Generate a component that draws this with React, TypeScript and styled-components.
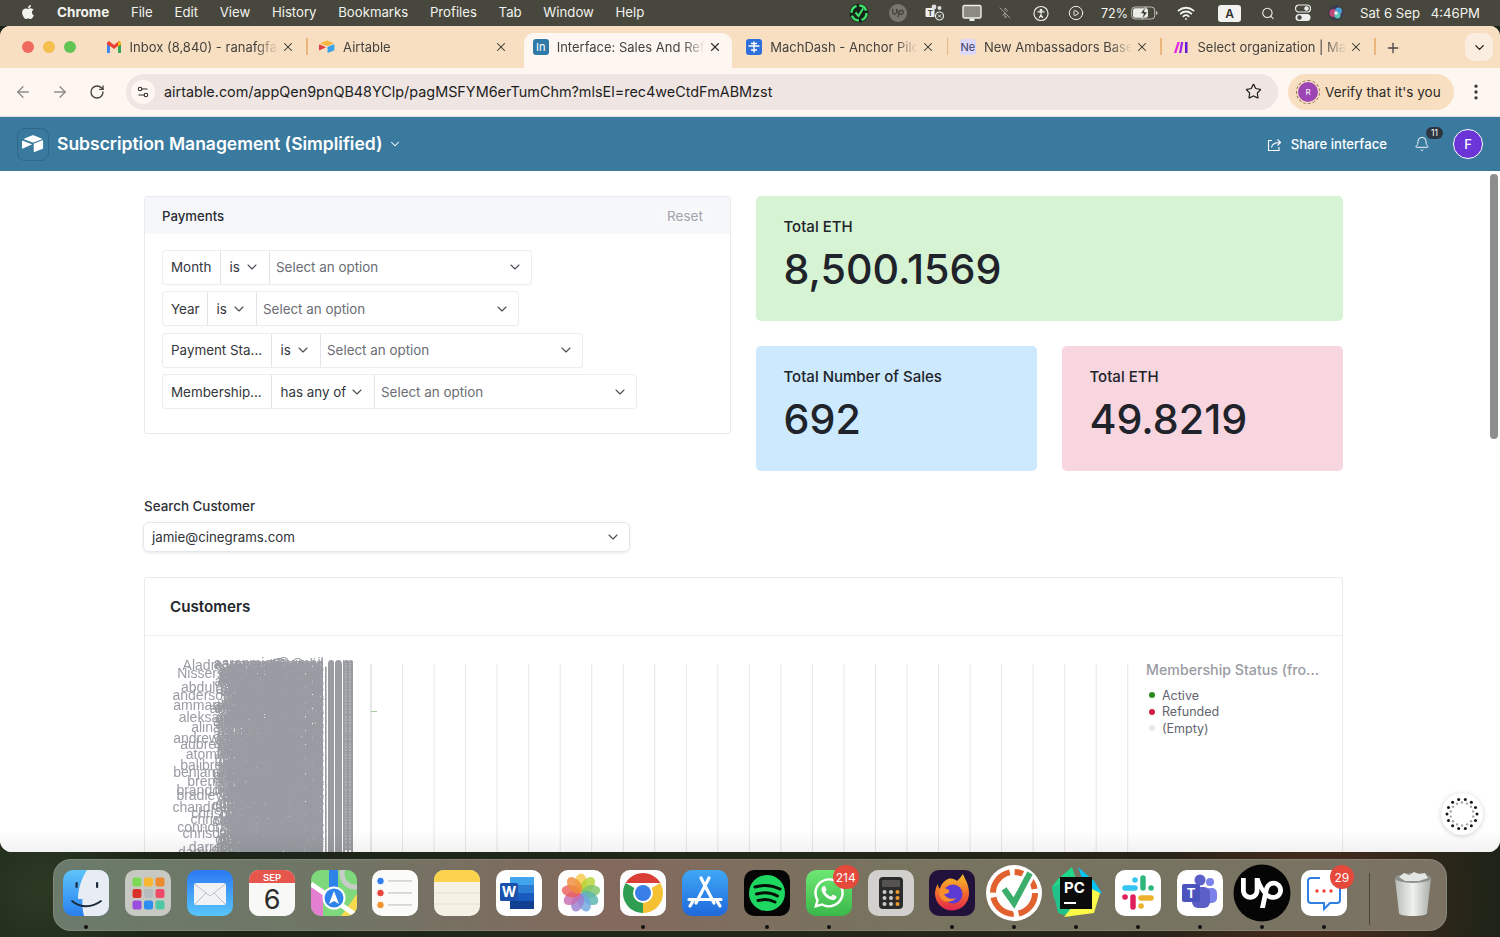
import React from "react";
import styled, { createGlobalStyle, css } from "styled-components";
import { ArrowLeft, ArrowRight, RotateCw, Star, MoreVertical, ChevronDown, X, Plus, Search, Wifi, Bell, Settings2, BluetoothOff, CirclePlay } from "lucide-react";
import { FaApple, FaWhatsapp } from "react-icons/fa";
import { SiUpwork } from "react-icons/si";

const Global = createGlobalStyle`
  html, body { margin: 0; padding: 0; height: 100%; overflow: hidden; }
  body { font-family: Inter, "Liberation Sans", sans-serif; -webkit-font-smoothing: antialiased; }
  #root { height: 100%; }
  * { box-sizing: border-box; }
`;

const Desktop = styled.div`
  width: 1500px; height: 937px; display: flex; flex-direction: column; overflow: hidden;
  background:
    radial-gradient(circle at 1320px 900px, #4a2e1e 0, rgba(74,46,30,0) 170px),
    radial-gradient(circle at 40px 890px, #2c3a24 0, rgba(44,58,36,0) 120px),
    linear-gradient(90deg, #1b2417, #20281a 50%, #2a2218 85%, #1f2418);
`;
const MenuBar = styled.header`
  height: 26px; flex: none; display: flex; align-items: center; background: #47473d; color: #f3f3ef;
  padding: 0 20px 0 21px; font-size: 13.2px;
`;
const AppleMark = styled.span` display: flex; width: 14px; font-size: 16px; margin-right: 22px; margin-top: -2px; `;
const MenuList = styled.nav` display: flex; gap: 21.7px; align-items: center; margin-top: -2px; `;
const MenuItem = styled.span<{ $bold?: boolean }>` font-weight: ${p => (p.$bold ? 700 : 400)}; font-size: ${p => (p.$bold ? "13.5px" : "inherit")}; `;
const Status = styled.div` margin-left: auto; display: flex; align-items: center; `;
const Slot = styled.span<{ $ml: number; $w: number; $faded?: boolean }>`
  display: flex; align-items: center; justify-content: center; flex: none;
  width: ${p => p.$w}px; margin-left: ${p => p.$ml}px; opacity: ${p => (p.$faded ? 0.6 : 1)};
`;
const Percent = styled.span` font-size: 12.5px; white-space: nowrap; `;
const KeyBox = styled.span`
  width: 23px; height: 17px; border-radius: 3px; background: #f2f2f0; color: #333; font-size: 12px; font-weight: 600;
  display: flex; align-items: center; justify-content: center;
`;
const Clock = styled.span` margin-left: 16px; width: 120px; white-space: nowrap; font-size: 13.2px; display: flex; justify-content: space-between; margin-top: -1px; `;

const BrowserWindow = styled.main`
  height: 826px; flex: none; display: flex; flex-direction: column; overflow: hidden; background: #fff;
  border-radius: 10px 10px 12px 12px;
`;
const TabStrip = styled.div`
  height: 42px; flex: none; background: #f8dfc2; display: flex; padding: 7px 0 0 22px; color: #3a3a38; position: relative;
`;
const Lights = styled.div` display: flex; gap: 9px; width: 72px; padding-top: 8px; `;
const Light = styled.span<{ $c: string }>` width: 12px; height: 12px; border-radius: 50%; background: ${p => p.$c}; `;
const Tab = styled.div<{ $active?: boolean; $divider?: boolean }>`
  width: 213.6px; height: 35px; padding: 0 13px 7px 11.5px; display: flex; align-items: center; position: relative; font-size: 13px; flex: none;
  ${p => p.$active && css`
    &::before { content: ""; position: absolute; inset: 0 3px 0 3px; background: #fdf6f1; border-radius: 10px 10px 0 0; }
  `}
  ${p => p.$divider && css`
    &::after { content: ""; position: absolute; right: 0; top: 5px; height: 17px; width: 1.5px; background: #ecb57c; }
  `}
`;
const Favicon = styled.span` width: 16px; height: 16px; flex: none; position: relative; display: flex; `;
const TabTitle = styled.span`
  position: relative; margin-left: 8px; flex: 1; overflow: hidden; white-space: nowrap; min-width: 0; color: #44423e;
  -webkit-mask-image: linear-gradient(90deg, #000 85%, transparent);
  mask-image: linear-gradient(90deg, #000 85%, transparent);
`;
const TabClose = styled.span` position: relative; display: flex; margin-left: 3px; color: #33322f; `;
const NewTab = styled.span` display: flex; margin: 0 0 6px 9px; align-items: center; color: #4a4a47; `;
const TabMenu = styled.span`
  position: absolute; left: 1465px; top: 7px; width: 28px; height: 28px; border-radius: 9px; background: #fbeee0;
  display: flex; align-items: center; justify-content: center; color: #222;
`;
const Toolbar = styled.div`
  height: 49px; flex: none; background: #fdf6f1; display: flex; align-items: center; padding: 0 0 1px 14px; border-bottom: 1px solid #e6e0dc; color: #8d8a87;
`;
const NavButton = styled.span<{ $w: number; $on?: boolean }>`
  display: flex; width: ${p => p.$w}px; flex: none; color: ${p => (p.$on ? "#45423c" : "#8f8c89")};
`;
const Omnibox = styled.div`
  width: 1152px; height: 36px; flex: none; border-radius: 18px; background: #efe6e3; display: flex; align-items: center; padding: 0 16px 0 5px; color: #1e1e1e; margin-left: 3px;
`;
const SiteButton = styled.span`
  width: 24px; height: 24px; border-radius: 50%; background: #fdf6f1; display: flex; align-items: center; justify-content: center; color: #2a2a2a; flex: none;
`;
const Url = styled.span` margin-left: 9px; font-size: 14.4px; flex: 1; white-space: nowrap; `;
const VerifyPill = styled.div`
  margin-left: 10px; width: 166px; height: 36px; flex: none; border-radius: 18px; background: #f8dfc2; display: flex; align-items: center; padding-left: 10px; gap: 7px; color: #2c2a26; font-size: 13.5px; white-space: nowrap;
`;
const Avatar = styled.span`
  width: 20px; height: 20px; border-radius: 50%; background: #9c45b5; color: #fff; font-size: 8px; display: flex; align-items: center; justify-content: center; outline: 1.5px dashed #8e7a60; outline-offset: 1px; flex: none;
`;
const KebabSlot = styled.span` display: flex; margin-left: 12px; color: #3a3835; `;

const AppHeader = styled.div`
  height: 54px; flex: none; background: #3a7a9f; display: flex; align-items: center; color: #fff; padding: 0 17px;
`;
const LogoBox = styled.span`
  width: 32px; height: 33px; border-radius: 8px; border: 1px solid #2f6889; display: flex; align-items: center; justify-content: center; flex: none;
`;
const AppTitle = styled.h1` margin: -1px 6px 0 8px; font-size: 17.5px; font-weight: 600; white-space: nowrap; `;
const HeaderRight = styled.div` margin-left: auto; display: flex; align-items: center; `;
const ShareLabel = styled.span` font-size: 13.2px; font-weight: 500; margin: -1px 0 0 9px; white-space: nowrap; `;
const BellWrap = styled.span` position: relative; margin-left: 27px; display: flex; `;
const BellBadge = styled.span`
  position: absolute; left: 12px; top: -9px; min-width: 17px; height: 12px; border-radius: 6px; background: #2c3440; color: #fff; font-size: 8.5px; display: flex; align-items: center; justify-content: center;
`;
const UserDot = styled.span`
  margin-left: 23px; width: 30px; height: 30px; border-radius: 50%; background: #6b35d8; border: 1.5px solid #fff; color: #fff; font-size: 13px; font-weight: 500; display: flex; align-items: center; justify-content: center;
`;

const Content = styled.section`
  flex: 1; min-height: 0; position: relative; overflow: hidden; background: #fff;
`;
const Page = styled.div` padding: 25px 157px 0 144px; `;
const TopGrid = styled.div` display: grid; grid-template-columns: 587px 587px; gap: 25px; height: 274px; align-items: start; `;
const FilterCard = styled.div` border: 1px solid #e9eaec; border-radius: 3px; height: 238px; `;
const FilterHead = styled.div`
  height: 37px; background: #f5f7fa; display: flex; align-items: center; justify-content: space-between; padding: 0 17px; font-size: 13.2px; font-weight: 500; color: #2a2d33;
`;
const ResetButton = styled.span`
  height: 20px; width: 56px; background: #f7f8fa; border-radius: 3px; color: #a2a5aa; font-weight: 400; font-size: 13.5px; display: flex; align-items: center; justify-content: center;
`;
const FilterList = styled.div` display: flex; flex-direction: column; align-items: flex-start; gap: 8.6px; padding: 16.5px 17px 0 17.5px; `;
const FilterRow = styled.div`
  display: flex; height: 33px; border-radius: 3px; box-shadow: 0 0 0 1px #eceded, 0 1px 2px rgba(0,0,0,.05); font-size: 13.4px; color: #33363c; background: #fff;
`;
const FieldName = styled.span<{ $w: number }>`
  width: ${p => p.$w}px; padding: 0 0 0 8.5px; display: flex; align-items: center; border-right: 1px solid #e4e5e7; white-space: nowrap;
`;
const Operator = styled.span<{ $w: number }>`
  width: ${p => p.$w}px; padding: 0 9px; display: flex; align-items: center; justify-content: space-between; border-right: 1px solid #e4e5e7; white-space: nowrap;
`;
const OptionSelect = styled.span`
  width: 261px; padding: 0 8px 0 6.5px; display: flex; align-items: center; justify-content: space-between; color: #6a6d73; white-space: nowrap;
`;
const StatColumn = styled.div` display: flex; flex-direction: column; gap: 25.4px; `;
const StatRow = styled.div` display: grid; grid-template-columns: 281px 281px; gap: 25px; `;
const StatCard = styled.div<{ $bg: string }>`
  height: 124.6px; border-radius: 5px; background: ${p => p.$bg}; padding: 21px 27.5px; color: #20232a;
`;
const StatLabel = styled.div` font-size: 15px; font-weight: 500; line-height: 20px; white-space: nowrap; `;
const StatValue = styled.div` font-size: 41.2px; font-weight: 500; line-height: 48px; margin-top: 8px; `;
const SearchLabel = styled.div` margin-top: 26px; font-size: 13.4px; font-weight: 500; line-height: 20px; color: #2d3036; `;
const SearchSelect = styled.div`
  margin: 6px 0 0 -1px; width: 487px; height: 30px; border-radius: 6px; border: 1px solid #e6e7e9; box-shadow: 0 1px 3px rgba(0,0,0,.1); display: flex; align-items: center; justify-content: space-between; padding: 0 8px 1px; font-size: 13.3px; color: #2f3238;
`;
const CustomersCard = styled.div` margin-top: 25px; border: 1px solid #e9eaec; border-bottom: none; border-radius: 3px 3px 0 0; `;
const CustomersHead = styled.div`
  height: 58px; display: flex; align-items: center; padding: 0 25px; font-size: 15.2px; font-weight: 600; color: #23262c; border-bottom: 1px solid #eceded;
`;
const ChartArea = styled.div` display: flex; height: 260px; `;
const ChartSvg = styled.svg` width: 1000px; height: 260px; flex: none; display: block; overflow: hidden; `;
const Legend = styled.aside` padding: 25px 0 0 1px; width: 178px; `;
const LegendTitle = styled.div` font-size: 14.2px; font-weight: 500; color: #9a9ca3; white-space: nowrap; line-height: 18px; margin-bottom: 8px; `;
const LegendItem = styled.div<{ $dot: string }>`
  display: flex; align-items: center; gap: 7px; height: 16.6px; font-size: 12.5px; color: #62656d; padding-left: 3px;
  &::before { content: ""; width: 6px; height: 6px; border-radius: 50%; background: ${p => p.$dot}; }
`;
const BottomFade = styled.div`
  position: absolute; left: 0; right: 0; bottom: 0; height: 22px; background: linear-gradient(rgba(0,0,0,0), rgba(0,0,0,.05)); pointer-events: none;
`;
const ScrollThumb = styled.div`
  position: absolute; right: 2px; top: 3px; width: 8px; height: 265px; border-radius: 4px; background: #8e8e8e;
`;
const SpinnerFab = styled.div`
  position: absolute; left: 1441px; top: 622px; width: 42px; height: 42px; border-radius: 50%; background: #fff; box-shadow: 0 1px 5px rgba(0,0,0,.18); display: flex; align-items: center; justify-content: center;
`;

const DockZone = styled.div` flex: 1; display: flex; justify-content: center; padding-top: 7px; `;
const Dock = styled.footer`
  width: 1394px; height: 72px; border-radius: 18px; display: flex; align-items: flex-start; gap: 15.9px; padding: 10px 0 0 9px;
  background: linear-gradient(90deg, #6b7b6b 0%, #6f7565 20%, #83695d 40%, #77735f 60%, #767360 78%, #7c7264 100%);
  border: 1px solid rgba(255,255,255,.12);
`;
const DockItem = styled.div<{ $w?: number; $run?: boolean }>`
  width: ${p => p.$w ?? 46}px; height: 46px; flex: none; position: relative; display: flex; align-items: center; justify-content: center;
  ${p => p.$w && p.$w > 46 && `margin: 0 -${(p.$w - 46) / 2}px;`}
  ${p => p.$run && css`
    &::after { content: ""; position: absolute; left: 50%; margin-left: -2px; top: 55px; width: 4px; height: 4px; border-radius: 50%; background: #111; }
  `}
  svg { overflow: visible; flex: none; }
`;
const DockBadge = styled.span`
  position: absolute; right: -7px; top: -5px; height: 24px; min-width: 24px; padding: 0 3px; border-radius: 12px; background: #e5493c; color: #fff; font-size: 12px; display: flex; align-items: center; justify-content: center;
`;
const DockSep = styled.span` width: 1px; height: 52px; background: #4a4438; flex: none; margin: 3px 4px 0 6px; `;

const MacIcon = ({ children, defs }: { children: React.ReactNode; defs?: React.ReactNode }) => (
  <svg width="46" height="46" viewBox="0 0 46 46">{defs && <defs>{defs}</defs>}{children}</svg>
);

const AirtableGlyph = ({ s, mono }: { s: number; mono?: boolean }) => (
  <svg width={s} height={s} viewBox="0 0 24 24">
    <path d="M10.8 2.6 2.7 5.9c-.5.2-.5.9 0 1.1l8.2 3.2c.7.3 1.5.3 2.2 0l8.2-3.2c.5-.2.5-.9 0-1.1l-8.1-3.3c-.8-.3-1.6-.3-2.4 0Z" fill={mono ? "#fff" : "#f5b63c"} />
    <path d="M12.8 12.1v8.2c0 .4.4.7.8.5l9-3.5c.2-.1.4-.3.4-.6V8.5c0-.4-.4-.7-.8-.5l-9 3.5c-.2.1-.4.3-.4.6Z" fill={mono ? "#fff" : "#3aa3e8"} />
    <path d="M10.7 12.5 1 17c-.4.2-1-.1-1-.5V9c0-.2.1-.3.2-.4l.3-.2c.2-.1.4-.1.6 0l9.6 3.8c.4.1.4.6 0 .8Z" fill={mono ? "#fff" : "#e2433f"} />
  </svg>
);

const GmailIcon = () => (
  <svg width="16" height="16" viewBox="0 0 16 16">
    <path d="M1 3.5V14h3V7l4 3 4-3v7h3V3.5L13 2 8 6 3 2Z" fill="#ea4335" />
    <path d="M1 5.5V14h3V7.5Z" fill="#4285f4" /><path d="M12 7.5V14h3V5.5Z" fill="#34a853" /><path d="M12 3.5V7.5l3-2.2V3.5L13.6 2.2Z" fill="#fbbc05" />
  </svg>
);
const LetterFav = styled.span<{ $bg: string; $fg: string }>`
  width: 16px; height: 16px; border-radius: 3px; background: ${p => p.$bg}; color: ${p => p.$fg}; font-size: 11px; display: flex; align-items: center; justify-content: center;
`;
const MachFav = () => (
  <svg width="16" height="16" viewBox="0 0 16 16"><rect width="16" height="16" rx="3" fill="#2f6fdb" /><path d="M8 2.5v11M2.5 7h11M5 4.5h6M5 11h6" stroke="#fff" strokeWidth="1.4" fill="none" /></svg>
);
const MakeFav = () => (
  <svg width="16" height="16" viewBox="0 0 16 16"><path d="M1 14 4.5 3H6.8L3.3 14Z" fill="#e61ee6" /><path d="M6 14 8 3h2.3L8.3 14Z" fill="#a020f0" /><path d="M12 3h2.5v11H12Z" fill="#6a18d8" /></svg>
);

const ChevronSmall = () => <ChevronDown size={16} strokeWidth={1.6} color="#4a4d53" />;

const filterRows = [
  { field: "Month", fw: 58, op: "is", ow: 49 },
  { field: "Year", fw: 45, op: "is", ow: 49 },
  { field: "Payment Sta...", fw: 109, op: "is", ow: 49 },
  { field: "Membership...", fw: 109, op: "has any of", ow: 103 },
];

const gridXs = Array.from({ length: 25 }, (_, i) => 226 + i * 31.53);

const names = ["aaron", "abby", "abdul", "adam", "adrian", "aiden", "alan", "alex", "alexis", "alice", "alina", "amber", "amir", "amy", "andre", "andy", "anna", "anton", "ari", "arun", "ashley", "atom", "aubrey", "austin", "bailey", "barry", "ben", "beth", "bill", "blake", "brad", "brandon", "brent", "brian", "bruce", "bryan", "caleb", "carl", "casey", "chad", "chan", "charles", "chloe", "chris", "cody", "colin", "connor", "craig", "curtis", "dale", "dan", "daniel", "darren", "david"];
const domains = ["gmail.com", "yahoo.com", "outlook.com", "hotmail.com", "icloud.com", "proton.com", "me.com", "studio.com", "mail.com", "films.com", "live.com", "aol.com", "cinema.com", "media.com"];
const fillChars = "mjatkersonlivhdbuyc";
const CHAR_W = 7;
const email = (name: string, left: number, seed: number, domain: string) => {
  const total = Math.round((354 - left) / CHAR_W);
  const budget = Math.max(2, total - domain.length - 1);
  const filler = fillChars.slice(seed % 7) + fillChars;
  return `${(name + filler).slice(0, budget)}@${domain}`;
};
const longLabels: [number, string, number][] = [
  [670, "Aladre1.", 181], [678, "Nisse", 180], [692, "abdulrah", 178], [700, "anderso", 182],
  [710, "ammar", 181], [722, "aleksand", 182], [732, "alina", 188], [743, "andrew", 180],
  [749, "aubrey", 186], [759, "atomic", 187], [770, "balibrea", 182], [777, "benjamin", 178],
  [786, "brent", 186], [795, "brandon", 176], [800, "bradley", 176], [812, "chandra", 176],
  [818, "christia", 178], [824, "chrisley", 186], [832, "connor", 178], [838, "chrisdav", 177],
  [852, "darrell", 177], [857, "damien", 180],
];
const fillerLabels = Array.from({ length: 260 }, (_, i) => {
  const n = names[Math.floor((i / 260) * names.length)];
  const seed = (i * 7919) % 97;
  const left = 218 + (seed % 30);
  return { y: 668 + i * 0.73, t: email(n, left, seed, domains[seed % domains.length]) };
});

const petals = [0, 40, 80, 120, 160, 200, 240, 280, 320];
const petalColors = ["#f7c948", "#b5d334", "#7cc46a", "#58b5b0", "#6fa6de", "#9b7fd0", "#c76db3", "#ea5f5a", "#f08c3a"];
const ringDots = Array.from({ length: 14 }, (_, i) => (i / 14) * Math.PI * 2);

export default function App() {
  return (
    <Desktop>
      <Global />
      <MenuBar>
        <AppleMark><FaApple /></AppleMark>
        <MenuList>
          {["Chrome", "File", "Edit", "View", "History", "Bookmarks", "Profiles", "Tab", "Window", "Help"].map((m, i) => (
            <MenuItem key={m} $bold={i === 0}>{m}</MenuItem>
          ))}
        </MenuList>
        <Status>
          <Slot $ml={0} $w={20}>
            <svg width="20" height="20" viewBox="0 0 20 20"><circle cx="10" cy="10" r="9.5" fill="#17231a" /><circle cx="10" cy="10" r="7.5" fill="none" stroke="#3ee26a" strokeWidth="2.4" strokeDasharray="9 2.8" /><path d="M6.5 9.5 9.5 13 14 5.5" fill="none" stroke="#3ee26a" strokeWidth="2" /></svg>
          </Slot>
          <Slot $ml={20} $w={18}>
            <svg width="18" height="18" viewBox="0 0 18 18"><circle cx="9" cy="9" r="9" fill="#77776e" /><SiUpwork x="3" y="3" size={12} color="#45453c" /></svg>
          </Slot>
          <Slot $ml={18} $w={20}>
            <svg width="20" height="18" viewBox="0 0 20 18"><rect x="0.5" y="4" width="9" height="9" rx="1" fill="#eee" /><text x="2.8" y="11.5" fontSize="7.5" fontWeight="700" fill="#47473d" fontFamily="Inter, sans-serif">T</text><circle cx="9" cy="3" r="2.4" fill="#ddd" /><circle cx="14.5" cy="4" r="2" fill="#ddd" /><circle cx="14.5" cy="12" r="4" fill="#47473d" stroke="#eee" strokeWidth="1.2" /><path d="M13 10.5 16 13.5M16 10.5 13 13.5" stroke="#eee" strokeWidth="1" /></svg>
          </Slot>
          <Slot $ml={17} $w={20}>
            <svg width="20" height="18" viewBox="0 0 20 18"><rect x="1" y="1.5" width="18" height="12.5" rx="1.5" fill="#8b8b83" stroke="#efefea" strokeWidth="1.4" /><rect x="7.5" y="14.5" width="5" height="2.5" fill="#efefea" /></svg>
          </Slot>
          <Slot $ml={17} $w={12} $faded><BluetoothOff size={16} strokeWidth={1.6} /></Slot>
          <Slot $ml={22} $w={16}>
            <svg width="17" height="17" viewBox="0 0 17 17" fill="none" stroke="#f0f0ec" strokeWidth="1.2"><circle cx="8.5" cy="8.5" r="7.5" /><circle cx="8.5" cy="5" r="1" fill="#f0f0ec" /><path d="M4.8 6.8h7.4M8.5 6.8v3.4M8.5 10.2l-2 3M8.5 10.2l2 3" /></svg>
          </Slot>
          <Slot $ml={19} $w={16}><CirclePlay size={18} strokeWidth={1.5} color="#f0f0ec" /></Slot>
          <Slot $ml={18} $w={25}><Percent>72%</Percent></Slot>
          <Slot $ml={4} $w={27}>
            <svg width="27" height="14" viewBox="0 0 27 14"><rect x="0.7" y="1" width="23" height="12" rx="3.2" fill="none" stroke="#bdbdb6" strokeWidth="1" /><rect x="2" y="2.3" width="15" height="9.4" rx="2" fill="#ecece8" /><path d="M25 5v4c1-.3 1.5-1 1.5-2s-.5-1.7-1.5-2Z" fill="#bdbdb6" /><path d="M14.5 0.8 9.5 7.6h3l-1.4 5.6 5.4-7.2h-3.2Z" fill="#2f2f29" stroke="#ecece8" strokeWidth=".6" /></svg>
          </Slot>
          <Slot $ml={19} $w={18}><Wifi size={18} strokeWidth={2.5} /></Slot>
          <Slot $ml={23} $w={23}><KeyBox>A</KeyBox></Slot>
          <Slot $ml={20} $w={14}><Search size={15} strokeWidth={1.8} /></Slot>
          <Slot $ml={20} $w={16}>
            <svg width="16" height="18" viewBox="0 0 16 18"><rect x="0.5" y="1" width="15" height="7" rx="3.5" fill="none" stroke="#eee" strokeWidth="1.2" /><circle cx="11.5" cy="4.5" r="2.2" fill="#eee" /><rect x="0.5" y="10" width="15" height="7" rx="3.5" fill="#eee" /><circle cx="4.5" cy="13.5" r="2.2" fill="#47473d" /></svg>
          </Slot>
          <Slot $ml={17} $w={16}>
            <svg width="16" height="16" viewBox="0 0 16 16"><circle cx="8" cy="8" r="7.5" fill="#3b3a52" /><circle cx="5.5" cy="8" r="4" fill="#c2477a" /><circle cx="10.5" cy="6" r="3.4" fill="#4a9fd8" /><circle cx="9.5" cy="10.5" r="3" fill="#57c6b8" /><circle cx="8" cy="8" r="1.8" fill="#eee" /></svg>
          </Slot>
          <Clock><span>Sat 6 Sep</span><span>4:46PM</span></Clock>
        </Status>
      </MenuBar>

      <BrowserWindow>
        <TabStrip>
          <Lights><Light $c="#ef6a5e" /><Light $c="#f4bf4f" /><Light $c="#61c554" /></Lights>
          <Tab $divider>
            <Favicon><GmailIcon /></Favicon><TabTitle>Inbox (8,840) - ranafgfa</TabTitle>
            <TabClose><X size={14} strokeWidth={1.8} /></TabClose>
          </Tab>
          <Tab>
            <Favicon><AirtableGlyph s={16} /></Favicon><TabTitle>Airtable</TabTitle>
            <TabClose><X size={14} strokeWidth={1.8} /></TabClose>
          </Tab>
          <Tab $active>
            <Favicon><LetterFav $bg="#2f7aa8" $fg="#fff">In</LetterFav></Favicon><TabTitle>Interface: Sales And Ref</TabTitle>
            <TabClose><X size={14} strokeWidth={2} /></TabClose>
          </Tab>
          <Tab $divider>
            <Favicon><MachFav /></Favicon><TabTitle>MachDash - Anchor Pilot</TabTitle>
            <TabClose><X size={14} strokeWidth={1.8} /></TabClose>
          </Tab>
          <Tab $divider>
            <Favicon><LetterFav $bg="#dcd8f8" $fg="#3a3a60">Ne</LetterFav></Favicon><TabTitle>New Ambassadors Base</TabTitle>
            <TabClose><X size={14} strokeWidth={1.8} /></TabClose>
          </Tab>
          <Tab $divider>
            <Favicon><MakeFav /></Favicon><TabTitle>Select organization | Make</TabTitle>
            <TabClose><X size={14} strokeWidth={1.8} /></TabClose>
          </Tab>
          <NewTab><Plus size={16} strokeWidth={2} /></NewTab>
          <TabMenu><ChevronDown size={15} strokeWidth={2.2} /></TabMenu>
        </TabStrip>
        <Toolbar>
          <NavButton $w={37}><ArrowLeft size={18} strokeWidth={1.8} /></NavButton>
          <NavButton $w={38}><ArrowRight size={18} strokeWidth={1.8} /></NavButton>
          <NavButton $w={34} $on><RotateCw size={16} strokeWidth={2} /></NavButton>
          <Omnibox>
            <SiteButton><Settings2 size={14} strokeWidth={1.8} /></SiteButton>
            <Url>airtable.com/appQen9pnQB48YClp/pagMSFYM6erTumChm?mlsEl=rec4weCtdFmABMzst</Url>
            <Star size={17} strokeWidth={1.7} />
          </Omnibox>
          <VerifyPill><Avatar>R</Avatar>Verify that it's you</VerifyPill>
          <KebabSlot><MoreVertical size={20} strokeWidth={2} /></KebabSlot>
        </Toolbar>
        <AppHeader>
          <LogoBox><AirtableGlyph s={22} mono /></LogoBox>
          <AppTitle>Subscription Management (Simplified)</AppTitle>
          <ChevronDown size={14} strokeWidth={1.8} />
          <HeaderRight>
            <svg width="15" height="15" viewBox="0 0 15 15" fill="none" stroke="#fff" strokeWidth="1.1"><path d="M5 3.5H1.5v10h10.5V10" /><path d="M4.5 10.5c.5-3 3-5 8.5-5M10.5 2.5 13.5 5.5 10.5 8.5" /></svg>
            <ShareLabel>Share interface</ShareLabel>
            <BellWrap>
              <Bell size={16} strokeWidth={1.4} />
              <BellBadge>11</BellBadge>
            </BellWrap>
            <UserDot>F</UserDot>
          </HeaderRight>
        </AppHeader>
        <Content>
          <Page>
            <TopGrid>
              <FilterCard>
                <FilterHead>Payments<ResetButton>Reset</ResetButton></FilterHead>
                <FilterList>
                  {filterRows.map(r => (
                    <FilterRow key={r.field}>
                      <FieldName $w={r.fw}>{r.field}</FieldName>
                      <Operator $w={r.ow}>{r.op}<ChevronSmall /></Operator>
                      <OptionSelect>Select an option<ChevronSmall /></OptionSelect>
                    </FilterRow>
                  ))}
                </FilterList>
              </FilterCard>
              <StatColumn>
                <StatCard $bg="#d6f3d3"><StatLabel>Total ETH</StatLabel><StatValue>8,500.1569</StatValue></StatCard>
                <StatRow>
                  <StatCard $bg="#cce9fd"><StatLabel>Total Number of Sales</StatLabel><StatValue>692</StatValue></StatCard>
                  <StatCard $bg="#f8d6e0"><StatLabel>Total ETH</StatLabel><StatValue>49.8219</StatValue></StatCard>
                </StatRow>
              </StatColumn>
            </TopGrid>
            <SearchLabel>Search Customer</SearchLabel>
            <SearchSelect>jamie@cinegrams.com<ChevronSmall /></SearchSelect>
            <CustomersCard>
              <CustomersHead>Customers</CustomersHead>
              <ChartArea>
                <ChartSvg viewBox="145 636 1000 260">
                  {gridXs.map((x, i) => (
                    <line key={x} x1={x + 145} x2={x + 145} y1="664" y2="896" stroke={i === 0 ? "#d0d0d0" : "#e6e6e6"} />
                  ))}
                  <line x1="371" x2="377" y1="711.5" y2="711.5" stroke="#a8cda0" />
                  <g opacity="0.999" fontFamily="'Liberation Sans', Arial, sans-serif" fontSize="14" fill="#9a9ca3" textAnchor="end">
                    {fillerLabels.map((l, i) => <text key={i} x="354" y={l.y}>{l.t}</text>)}
                    {longLabels.map(([y, n, left]) => <text key={y} x="354" y={y}>{email(n, left, y, "gmail.com")}</text>)}
                  </g>
                </ChartSvg>
                <Legend>
                  <LegendTitle>Membership Status (fro...</LegendTitle>
                  <LegendItem $dot="#2d8a1f">Active</LegendItem>
                  <LegendItem $dot="#d02040">Refunded</LegendItem>
                  <LegendItem $dot="#e3e6ee">(Empty)</LegendItem>
                </Legend>
              </ChartArea>
            </CustomersCard>
          </Page>
          <BottomFade />
          <ScrollThumb />
          <SpinnerFab>
            <svg width="34" height="34" viewBox="-17 -17 34 34">
              {ringDots.map((a, i) => <circle key={i} cx={15 * Math.cos(a)} cy={15 * Math.sin(a)} r="1.5" fill="#151515" />)}
              {ringDots.map((a, i) => <circle key={i} cx={11.5 * Math.cos(a + 0.22)} cy={11.5 * Math.sin(a + 0.22)} r="1.2" fill="#a5a5a5" />)}
            </svg>
          </SpinnerFab>
        </Content>
      </BrowserWindow>

      <DockZone>
        <Dock>
          <DockItem $run>
            <MacIcon defs={<linearGradient id="fd" x1="0" y1="0" x2="0" y2="1"><stop offset="0" stopColor="#5cc4fa" /><stop offset="1" stopColor="#2a7ff0" /></linearGradient>}>
              <rect width="46" height="46" rx="10" fill="url(#fd)" />
              <path d="M24 0h12a10 10 0 0 1 10 10v26a10 10 0 0 1-10 10H21c-1.5-6-2-12-1.5-17H15C15 18 19 8 24 0Z" fill="#e8edf4" />
              <rect x="12.5" y="12" width="2.2" height="6" rx="1" fill="#1b2a3d" /><rect x="33" y="12" width="2.2" height="6" rx="1" fill="#1b2a3d" />
              <path d="M9 31c8 7 20 7 29 0" fill="none" stroke="#1b2a3d" strokeWidth="1.8" strokeLinecap="round" />
            </MacIcon>
          </DockItem>
          <DockItem>
            <MacIcon>
              <rect width="46" height="46" rx="10" fill="#c9c9c3" />
              {["#7ed957", "#f7b733", "#ee8a2e", "#d9322a", "#b5bcbf", "#ef4b68", "#9b4de0", "#2e8ef0", "#4fc8a4"].map((c, i) => (
                <rect key={c} x={7.5 + (i % 3) * 11.5} y={7.5 + Math.floor(i / 3) * 11.5} width="9" height="9" rx="2" fill={c} />
              ))}
            </MacIcon>
          </DockItem>
          <DockItem>
            <MacIcon defs={<linearGradient id="ml" x1="0" y1="0" x2="0" y2="1"><stop offset="0" stopColor="#2b79f2" /><stop offset="1" stopColor="#58c6fb" /></linearGradient>}>
              <rect width="46" height="46" rx="10" fill="url(#ml)" />
              <rect x="7" y="13" width="32" height="22" rx="2.5" fill="#f0f2f5" />
              <path d="M7.5 14 23 26 38.5 14M7.5 34.5 19 23M38.5 34.5 27 23" fill="none" stroke="#b9bec6" strokeWidth="1" />
            </MacIcon>
          </DockItem>
          <DockItem>
            <MacIcon>
              <rect width="46" height="46" rx="10" fill="#f8f8f6" />
              <path d="M0 13V10A10 10 0 0 1 10 0H36A10 10 0 0 1 46 10V13Z" fill="#e6564c" />
              <text x="23" y="10.5" textAnchor="middle" fontSize="9.5" fontWeight="600" fill="#fff" fontFamily="Inter, sans-serif">SEP</text>
              <text x="23" y="39" textAnchor="middle" fontSize="27" fill="#2a2a2a" fontFamily="Inter, sans-serif">6</text>
            </MacIcon>
          </DockItem>
          <DockItem>
            <MacIcon>
              <clipPath id="mp"><rect width="46" height="46" rx="10" /></clipPath>
              <g clipPath="url(#mp)">
                <rect width="46" height="46" fill="#7ed97c" />
                <rect width="12" height="46" y="18" fill="#e27fd0" />
                <path d="M30 46 46 24V46Z" fill="#f5d94e" />
                <circle cx="44" cy="4" r="13" fill="none" stroke="#c8ccc8" strokeWidth="5" />
                <path d="M0 14 46 46" stroke="#fff" strokeWidth="5" />
                <rect x="18" y="0" width="9" height="28" fill="#2f84ea" />
                <circle cx="23" cy="28" r="10.5" fill="#2f84ea" stroke="#fff" strokeWidth="2" />
                <path d="M23 21 28 34 23 31 18 34Z" fill="#fff" />
              </g>
            </MacIcon>
          </DockItem>
          <DockItem>
            <MacIcon>
              <rect width="46" height="46" rx="10" fill="#fbfbfa" />
              {[["#2f7ff0", 11], ["#e8453c", 23], ["#f0922e", 35]].map(([c, y]) => (
                <g key={String(c)}>
                  <circle cx="8.5" cy={Number(y)} r="3.8" fill={String(c)} stroke="#fff" strokeWidth="1" />
                  <rect x="16" y={Number(y) - 1} width="24" height="1.8" fill="#d6d6d4" />
                </g>
              ))}
            </MacIcon>
          </DockItem>
          <DockItem>
            <MacIcon>
              <rect width="46" height="46" rx="10" fill="#f5f1e4" />
              <path d="M0 12V10A10 10 0 0 1 10 0H36A10 10 0 0 1 46 10V12Z" fill="#fcd34d" />
              <path d="M0 23h46M0 34h46" stroke="#e2dfd3" strokeWidth="1" />
            </MacIcon>
          </DockItem>
          <DockItem>
            <MacIcon>
              <rect width="46" height="46" rx="10" fill="#fff" />
              <path d="M14 7h24v8H14Z" fill="#41a5ee" /><path d="M14 15h24v8H14Z" fill="#2b7cd3" /><path d="M14 23h24v8H14Z" fill="#185abd" /><path d="M14 31h24v8H14Z" fill="#103f91" />
              <rect x="4" y="13" width="18" height="18" rx="1.5" fill="#1a51ad" />
              <text x="13" y="27" textAnchor="middle" fontSize="14" fontWeight="700" fill="#fff" fontFamily="Inter, sans-serif">W</text>
            </MacIcon>
          </DockItem>
          <DockItem>
            <MacIcon>
              <rect width="46" height="46" rx="10" fill="#fdfdfd" />
              {petals.map((a, i) => (
                <ellipse key={a} cx="23" cy="13" rx="6" ry="9.5" fill={petalColors[i]} opacity=".82" transform={`rotate(${a} 23 23)`} />
              ))}
            </MacIcon>
          </DockItem>
          <DockItem $run>
            <MacIcon>
              <rect width="46" height="46" rx="10" fill="#fbfbfb" />
              <path d="M5.7 13A20 20 0 0 1 40.3 13H23Z" fill="#d93f36" />
              <path d="M40.3 13A20 20 0 0 1 23 43L23 23Z" fill="#f4c133" />
              <path d="M23 43A20 20 0 0 1 5.7 13L23 23Z" fill="#2f9e50" />
              <circle cx="23" cy="23" r="10" fill="#fff" /><circle cx="23" cy="23" r="8" fill="#3a7ee8" />
            </MacIcon>
          </DockItem>
          <DockItem>
            <MacIcon defs={<linearGradient id="as" x1="0" y1="0" x2="0" y2="1"><stop offset="0" stopColor="#3fa8f5" /><stop offset="1" stopColor="#1f68dc" /></linearGradient>}>
              <rect width="46" height="46" rx="10" fill="url(#as)" />
              <path d="M27 8 14 33M19 8 32 33M7 29.5H39M8 36l3-5M38 36l-3-5" stroke="#fff" strokeWidth="3.2" strokeLinecap="round" fill="none" />
            </MacIcon>
          </DockItem>
          <DockItem $run>
            <MacIcon>
              <rect width="46" height="46" rx="10" fill="#050505" />
              <circle cx="23" cy="23" r="18" fill="#1ed760" />
              <path d="M11 17c8-2.5 17-2 25 2M12.5 24c7-2 15-1.5 21 2M14 30.5c6-1.5 12-1 17 1.5" fill="none" stroke="#061006" strokeWidth="3" strokeLinecap="round" />
            </MacIcon>
          </DockItem>
          <DockItem $run>
            <MacIcon defs={<linearGradient id="wa" x1="0" y1="0" x2="0" y2="1"><stop offset="0" stopColor="#6fe774" /><stop offset="1" stopColor="#39b84a" /></linearGradient>}>
              <rect width="46" height="46" rx="10" fill="url(#wa)" />
              <FaWhatsapp x="6" y="6" size={34} color="#fff" />
            </MacIcon>
            <DockBadge>214</DockBadge>
          </DockItem>
          <DockItem>
            <MacIcon>
              <rect width="46" height="46" rx="10" fill="#d2d0cc" />
              <rect x="11" y="7" width="24" height="32" rx="4" fill="#2b2b2b" />
              <rect x="14" y="10" width="18" height="7" rx="1" fill="#55534f" />
              {[0, 1, 2].flatMap(r => [0, 1, 2].map(c => (
                <circle key={`${r}${c}`} cx={16.5 + c * 6.5} cy={22 + r * 6} r="2" fill={c === 2 ? "#ef9a2c" : "#c9c9c6"} />
              )))}
            </MacIcon>
          </DockItem>
          <DockItem $run>
            <MacIcon defs={<linearGradient id="ff" x1="0" y1="0" x2="0" y2="1"><stop offset="0" stopColor="#f8c32c" /><stop offset=".5" stopColor="#f3702a" /><stop offset="1" stopColor="#e0254f" /></linearGradient>}>
              <rect width="46" height="46" rx="10" fill="#20123a" />
              <path d="M34 4c1 4 6 9 6 19a17 17 0 0 1-34 1c0-4 1-7 3-10 0 3 1 4 2 5 1-5 4-8 8-10 3-1 7 0 9 2 2-2 4-4 6-7Z" fill="url(#ff)" />
              <circle cx="24" cy="24" r="9.5" fill="#5b3bd1" />
              <path d="M11 18c4-1 6 1 9 2 1 3-2 4-5 4 2 4 7 6 12 4-2 3-8 5-12 3-4-2-6-8-4-13Z" fill="#f88f2c" />
            </MacIcon>
          </DockItem>
          <DockItem $w={56} $run>
            <svg width="56" height="56" viewBox="0 0 56 56">
              <circle cx="28" cy="28" r="28" fill="#fff" />
              <circle cx="28" cy="28" r="21" fill="none" stroke="#e2622f" strokeWidth="6" strokeDasharray="28 5" />
              <path d="M18 24 28 38 44 8" fill="none" stroke="#fff" strokeWidth="12" />
              <path d="M18 24 28 38 44 8" fill="none" stroke="#3cae6b" strokeWidth="6" />
            </svg>
          </DockItem>
          <DockItem $w={52} $run>
            <svg width="52" height="56" viewBox="0 0 52 56">
              <path d="M8 14 22 2 26 14 4 34 2 22Z" fill="#21d789" /><path d="M2 22 8 48 20 52 26 14Z" fill="#22c38a" /><path d="M28 2 44 16 52 28 38 30Z" fill="#07c3f2" /><path d="M50 28 38 22 14 52 44 48Z" fill="#fcf84a" />
              <rect x="10" y="12" width="32" height="32" fill="#0b0b0b" />
              <text x="14" y="28" fontSize="15" fontWeight="700" fill="#fff" fontFamily="Inter, sans-serif">PC</text>
              <rect x="14" y="37" width="12" height="2" fill="#fff" />
            </svg>
          </DockItem>
          <DockItem $run>
            <MacIcon>
              <rect width="46" height="46" rx="10" fill="#fff" />
              <g strokeLinecap="round" strokeWidth="5.5" fill="none">
                <path d="M10 18h10" stroke="#36c5f0" /><path d="M20 10v.1" stroke="#36c5f0" />
                <path d="M28 8v10" stroke="#2eb67d" /><path d="M36 18h.1" stroke="#2eb67d" />
                <path d="M26 28h10" stroke="#ecb22e" /><path d="M26 36h.1" stroke="#ecb22e" />
                <path d="M18 27v10" stroke="#e01e5a" /><path d="M10 27h.1" stroke="#e01e5a" />
              </g>
            </MacIcon>
          </DockItem>
          <DockItem $run>
            <MacIcon>
              <rect width="46" height="46" rx="10" fill="#fff" />
              <circle cx="33" cy="12" r="4" fill="#7b83eb" /><circle cx="23" cy="10" r="5.5" fill="#5b5fc7" />
              <rect x="28" y="18" width="12" height="15" rx="5" fill="#7b83eb" />
              <rect x="15" y="17" width="18" height="21" rx="6" fill="#5b5fc7" />
              <rect x="5" y="14" width="18" height="18" rx="2" fill="#4b53bc" />
              <text x="14" y="28" textAnchor="middle" fontSize="13" fontWeight="700" fill="#fff" fontFamily="Inter, sans-serif">T</text>
            </MacIcon>
          </DockItem>
          <DockItem $w={58} $run>
            <svg width="58" height="58" viewBox="0 0 58 58">
              <circle cx="29" cy="29" r="28.5" fill="#050505" />
              <SiUpwork x="8" y="8" size={42} color="#fff" />
            </svg>
          </DockItem>
          <DockItem $run>
            <MacIcon>
              <rect width="46" height="46" rx="10" fill="#fff" />
              <path d="M19 8H10a3 3 0 0 0-3 3v19a3 3 0 0 0 3 3h13v6l6-6h7a3 3 0 0 0 3-3V11a3 3 0 0 0-3-3h-5" fill="none" stroke="#2f80e0" strokeWidth="2" />
              <circle cx="16" cy="21" r="1.7" fill="#e8453c" /><circle cx="23" cy="21" r="1.7" fill="#e8453c" /><circle cx="30" cy="21" r="1.7" fill="#e8453c" />
            </MacIcon>
            <DockBadge>29</DockBadge>
          </DockItem>
          <DockSep />
          <DockItem>
            <MacIcon defs={<linearGradient id="tr" x1="0" y1="0" x2="1" y2="0"><stop offset="0" stopColor="#b8bcb6" /><stop offset=".5" stopColor="#eff1ed" /><stop offset="1" stopColor="#a9ada7" /></linearGradient>}>
              <path d="M5 8 9 43c0 2 5 3 14 3s14-1 14-3l4-35Z" fill="url(#tr)" />
              <ellipse cx="23" cy="8" rx="18" ry="5" fill="#8c8f8a" />
              <path d="M9 7l5-4 5 2 5-3 5 2 6-1 3 5-9 3H15Z" fill="#e4e6e3" />
            </MacIcon>
          </DockItem>
        </Dock>
      </DockZone>
    </Desktop>
  );
}
